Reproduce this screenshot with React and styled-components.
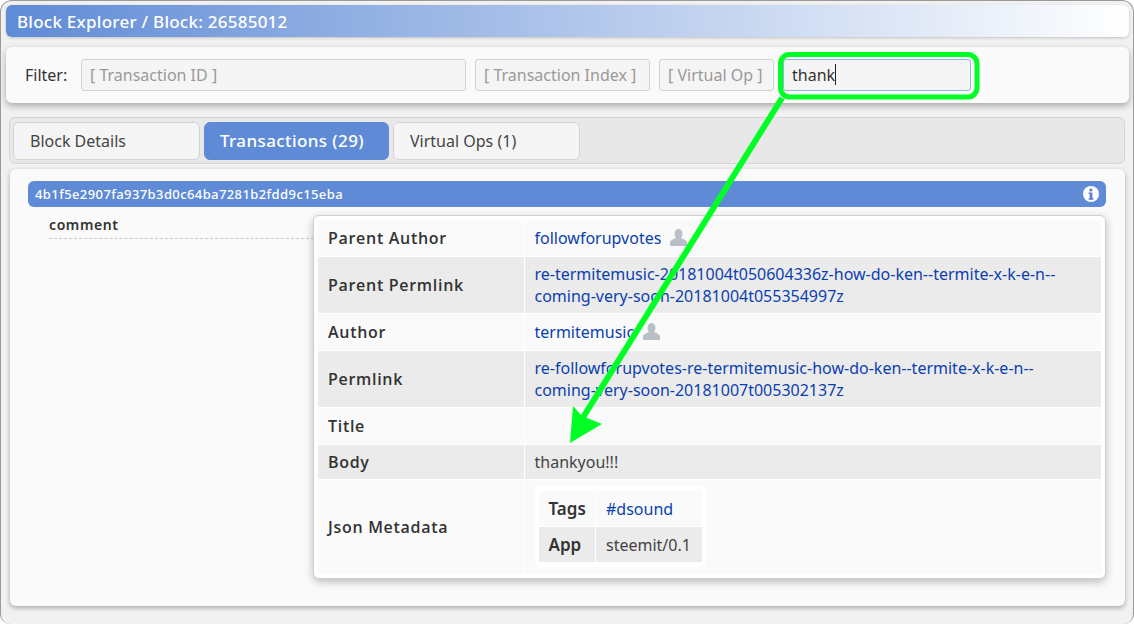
import React from 'react';
import styled, { createGlobalStyle } from 'styled-components';

const GlobalStyle = createGlobalStyle`
  html, body {
    margin: 0;
    padding: 0;
    background: #fff;
    font-family: "Noto Sans", "Open Sans", sans-serif;
    font-size: 16px;
    color: #333;
  }
`;

const Page = styled.div`
  position: relative;
  box-sizing: border-box;
  width: 1134px;
  height: 624px;
  padding: 4px 4px 0 5px;
  background: #f1f1f1;
  border: 1px solid #9a9a9a;
  border-bottom: 0;
  border-radius: 12px 12px 10px 10px;
  overflow: hidden;
`;

const TitleBar = styled.div`
  height: 32px;
  padding-left: 11px;
  display: flex;
  align-items: center;
  border-radius: 6px;
  background: linear-gradient(to right, #5f8bd6, #ffffff);
  box-shadow: 0 1px 3px rgba(0, 0, 0, 0.2);
  color: #fff;
  font-size: 17px;
  font-weight: 500;
  letter-spacing: 0.25px;
`;

const FilterPanel = styled.div`
  box-sizing: border-box;
  height: 56px;
  margin-top: 10px;
  padding: 12px 0 0 19px;
  display: flex;
  gap: 9px;
  border-radius: 6px;
  background: #fafafa;
  box-shadow: 0 3px 7px rgba(0, 0, 0, 0.3);
`;

const FilterLabel = styled.label`
  width: 47px;
  line-height: 32px;
  color: #333;
`;

const FilterInput = styled.input`
  box-sizing: border-box;
  width: ${(p) => p.$width}px;
  height: 32px;
  padding: 0 8px;
  border: 1px solid ${(p) => (p.$active ? '#8fb4e3' : '#d2d2d2')};
  border-radius: 3px;
  background: #f5f5f5;
  font: inherit;
  color: #333;
  outline: none;
  &::placeholder {
    color: #999;
    opacity: 1;
  }
`;

const TabBar = styled.div`
  box-sizing: border-box;
  height: 47px;
  margin: 14px 4px 0 3px;
  padding: 4px 3px;
  display: flex;
  gap: 4px;
  border: 1px solid #d4d4d4;
  border-radius: 6px;
  background: #e8e8e8;
`;

const Tab = styled.div`
  box-sizing: border-box;
  width: ${(p) => p.$width}px;
  height: 38px;
  padding: 0 0 ${(p) => (p.$active ? 2 : 0)}px ${(p) => (p.$active ? 15 : 16)}px;
  display: flex;
  align-items: center;
  border: 1px solid ${(p) => (p.$active ? '#5f8bd6' : '#d4d4d4')};
  border-radius: 6px;
  background: ${(p) => (p.$active ? '#5f8bd6' : '#f5f5f5')};
  color: ${(p) => (p.$active ? '#fff' : '#444')};
  font-size: ${(p) => (p.$active ? 17 : 16)}px;
  font-weight: ${(p) => (p.$active ? 500 : 400)};
  letter-spacing: ${(p) => (p.$active ? 0.4 : 0)}px;
`;

const Content = styled.div`
  position: relative;
  box-sizing: border-box;
  height: 437px;
  margin: 5px 4px 0 4px;
  padding: 12px 19px 0 18px;
  border-radius: 6px;
  background: #fafafa;
  box-shadow: 0 2px 5px rgba(0, 0, 0, 0.3);
`;

const HashBar = styled.div`
  box-sizing: border-box;
  height: 26px;
  padding: 0 7px;
  display: flex;
  align-items: center;
  justify-content: space-between;
  border-radius: 6px;
  background: #5f8bd6;
  color: #fff;
  font-size: 13px;
  font-weight: 500;
  letter-spacing: 0.4px;
`;

const OpName = styled.div`
  box-sizing: border-box;
  width: 265px;
  height: 32px;
  margin-left: 21px;
  padding-top: 8px;
  border-bottom: 1px dashed #c8c8c8;
  font-size: 14px;
  font-weight: 600;
  letter-spacing: 0.6px;
  color: #333;
`;

const Popover = styled.div`
  position: absolute;
  left: 303px;
  top: 46px;
  box-sizing: border-box;
  width: 793px;
  height: 364px;
  padding: 4px;
  border: 1px solid #d0d0d0;
  border-radius: 6px;
  background: #fff;
  box-shadow: 0 3px 8px rgba(0, 0, 0, 0.25);
`;

const DetailTable = styled.table`
  width: 100%;
  border-collapse: collapse;
  table-layout: fixed;
`;

const Row = styled.tr`
  height: ${(p) => p.$height}px;
  background: ${(p) => (p.$shaded ? '#ebebeb' : '#fafafa')};
  border-bottom: 1px solid #fff;
`;

const Label = styled.th`
  width: 206px;
  box-sizing: border-box;
  padding: 0 0 0 10px;
  border-right: 1px solid #fff;
  text-align: left;
  font-family: "Open Sans", sans-serif;
  font-size: 16px;
  font-weight: 600;
  letter-spacing: 0.7px;
  color: #333;
`;

const Value = styled.td`
  padding: 0 10px;
  font-size: 16px;
  line-height: 22px;
  color: #444;
`;

const Link = styled.a`
  color: #0b3fb0;
  text-decoration: none;
`;

const UserGlyph = styled.svg`
  margin-left: 9px;
  vertical-align: -2px;
  color: #b8bfc7;
`;

const NestedWrap = styled.div`
  width: 171px;
  padding: 5px 4px 4px;
  box-sizing: border-box;
  border-radius: 6px;
  background: #fff;
`;

const NestedLabel = styled.th`
  width: 57px;
  padding: 0 0 0 10px;
  box-sizing: border-box;
  border-right: 1px solid #fff;
  text-align: left;
  font-size: 17px;
  font-weight: 600;
  color: #333;
`;

const NestedValue = styled.td`
  padding: 0 10px;
  color: #444;
`;

const Annotation = styled.svg`
  position: absolute;
  left: 0;
  top: 0;
  pointer-events: none;
`;

const Caret = styled.span`
  position: absolute;
  left: 834px;
  top: 63px;
  width: 1px;
  height: 21px;
  background: #222;
`;

const UserIcon = () => (
  <UserGlyph width="17" height="17" viewBox="0 0 17 17">
    <ellipse cx="8.5" cy="5" rx="4" ry="5" fill="currentColor" />
    <path d="M0 17v-3c0-3 4-4 6-5h5c2 1 6 2 6 5v3z" fill="currentColor" />
  </UserGlyph>
);

const InfoIcon = () => (
  <svg width="16" height="16" viewBox="0 0 16 16">
    <circle cx="8" cy="8" r="8" fill="#fff" />
    <circle cx="7.9" cy="4" r="1.6" fill="#5f78e0" />
    <path d="M5.6 6.6h3.8v5.6h1.1v1.5H5.6v-1.5h1.1V8.1H5.6z" fill="#5f78e0" />
  </svg>
);

const rows = [
  { label: 'Parent Author', height: 36, user: true, link: ['followforupvotes'] },
  { label: 'Parent Permlink', height: 57, shaded: true, link: ['re-termitemusic-20181004t050604336z-how-do-ken--termite-x-k-e-n--', 'coming-very-soon-20181004t055354997z'] },
  { label: 'Author', height: 37, user: true, link: ['termitemusic'] },
  { label: 'Permlink', height: 57, shaded: true, link: ['re-followforupvotes-re-termitemusic-how-do-ken--termite-x-k-e-n--', 'coming-very-soon-20181007t005302137z'] },
  { label: 'Title', height: 37 },
  { label: 'Body', height: 35, shaded: true, text: 'thankyou!!!' },
];

const App = () => (
  <Page>
    <GlobalStyle />
    <TitleBar>Block Explorer / Block: 26585012</TitleBar>

    <FilterPanel>
      <FilterLabel>Filter:</FilterLabel>
      <FilterInput $width={385} placeholder="[ Transaction ID ]" readOnly />
      <FilterInput $width={175} placeholder="[ Transaction Index ]" readOnly />
      <FilterInput $width={115} placeholder="[ Virtual Op ]" readOnly />
      <FilterInput $width={188} $active value="thank" readOnly />
    </FilterPanel>

    <TabBar>
      <Tab $width={187}>Block Details</Tab>
      <Tab $width={185} $active>Transactions (29)</Tab>
      <Tab $width={187}>Virtual Ops (1)</Tab>
    </TabBar>

    <Content>
      <HashBar>
        4b1f5e2907fa937b3d0c64ba7281b2fdd9c15eba
        <InfoIcon />
      </HashBar>
      <OpName>comment</OpName>

      <Popover>
        <DetailTable>
          <tbody>
            {rows.map((r) => (
              <Row key={r.label} $height={r.height} $shaded={r.shaded}>
                <Label>{r.label}</Label>
                <Value>
                  {r.link && r.link.map((line, i) => (
                    <React.Fragment key={line}>
                      {i > 0 && <br />}
                      <Link>{line}</Link>
                    </React.Fragment>
                  ))}
                  {r.user && <UserIcon />}
                  {r.text}
                </Value>
              </Row>
            ))}
            <Row $height={95}>
              <Label>Json Metadata</Label>
              <Value>
                <NestedWrap>
                  <DetailTable>
                    <tbody>
                      <Row $height={36}>
                        <NestedLabel>Tags</NestedLabel>
                        <NestedValue><Link>#dsound</Link></NestedValue>
                      </Row>
                      <Row $height={36} $shaded>
                        <NestedLabel>App</NestedLabel>
                        <NestedValue>steemit/0.1</NestedValue>
                      </Row>
                    </tbody>
                  </DetailTable>
                </NestedWrap>
              </Value>
            </Row>
          </tbody>
        </DetailTable>
      </Popover>
    </Content>

    <Caret />
    <Annotation width="1134" height="624" viewBox="0 0 1134 624">
      <rect x="779.5" y="53.5" width="196.5" height="42.5" rx="9" fill="none" stroke="#00ff24" strokeWidth="5" />
      <line x1="781" y1="97" x2="581" y2="418" stroke="#00ff24" strokeWidth="6" />
      <polygon points="569,442 601,423 581,415 572,405" fill="#00ff24" />
    </Annotation>
  </Page>
);

export default App;
